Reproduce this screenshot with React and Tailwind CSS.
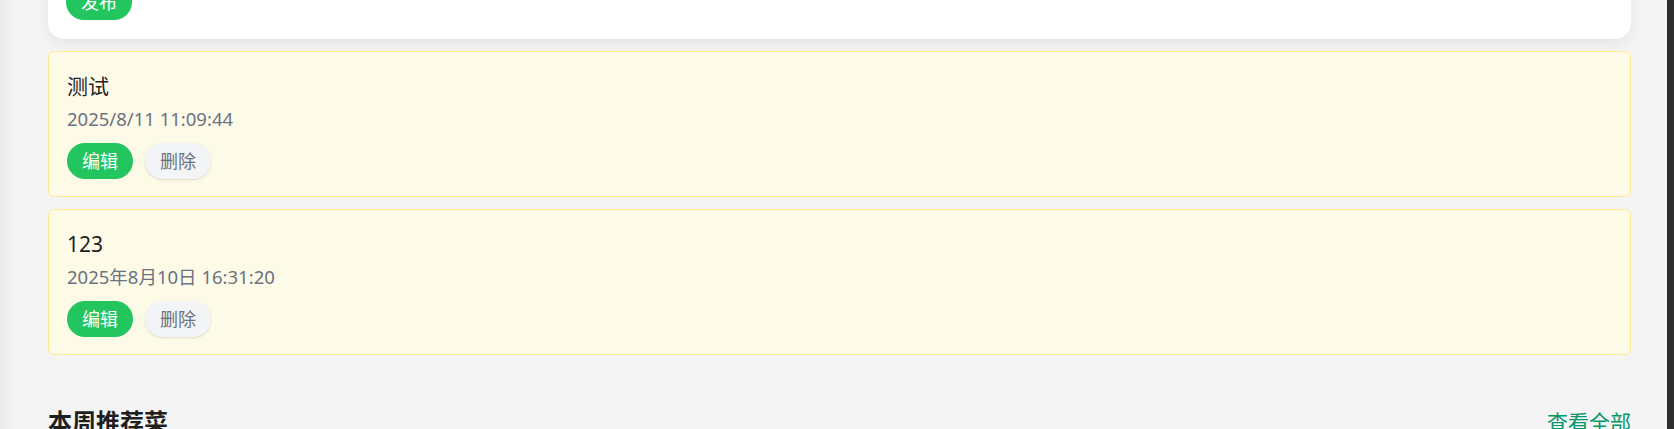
import React from "react";

const notes = [
  { title: "测试", time: "2025/8/11 11:09:44" },
  { title: "123", time: "2025年8月10日 16:31:20" },
];

function NoteCard({ title, time }) {
  return (
    <div className="rounded-md border border-[#fcea8c] bg-[#fefae8] px-[18px] pt-[18px] pb-[17px]">
      <div className="h-8 text-[21px] leading-8 text-[#1f1f1f]">{title}</div>
      <div className="mt-1 h-[26px] text-[18.5px] leading-[26px] text-[#6b7280]">{time}</div>
      <div className="mt-[11px] flex gap-3">
        <button className="h-9 px-[15px] rounded-full bg-[#22c55e] text-white text-[18px] leading-9">
          编辑
        </button>
        <button className="h-9 px-[15px] rounded-full bg-[#f3f4f6] text-[#6b7280] text-[18px] leading-9 shadow-sm">
          删除
        </button>
      </div>
    </div>
  );
}

export default function App() {
  return (
    <div
      className="h-[429px] w-full overflow-hidden flex bg-[#eeeeee]"
      style={{ fontFamily: '"Noto Sans", "Noto Sans CJK SC", sans-serif' }}
    >
      <div className="w-3 shrink-0 bg-gradient-to-r from-[#ececec] to-[#f1f1f1]" />
      <main className="flex-1 bg-[#f4f4f4] px-9 overflow-hidden">
        <div className="mt-[-36px] rounded-2xl bg-white px-[18px] pt-5 pb-[19px] shadow-[0_4px_14px_rgba(0,0,0,0.07)]">
          <button className="h-9 px-[15px] rounded-full bg-[#22c55e] text-white text-[18px] leading-9">
            发布
          </button>
        </div>
        <div className="mt-3 flex flex-col gap-3">
          {notes.map((n) => (
            <NoteCard key={n.title} {...n} />
          ))}
        </div>
        <div className="mt-[51px] flex items-center justify-between">
          <h2 className="text-[24px] leading-8 font-bold text-[#1f1f1f]">本周推荐菜</h2>
          <a className="text-[21px] leading-8 text-[#059669]">查看全部</a>
        </div>
      </main>
      <div className="w-[7px] shrink-0 bg-[#2d2d2d]" />
    </div>
  );
}
